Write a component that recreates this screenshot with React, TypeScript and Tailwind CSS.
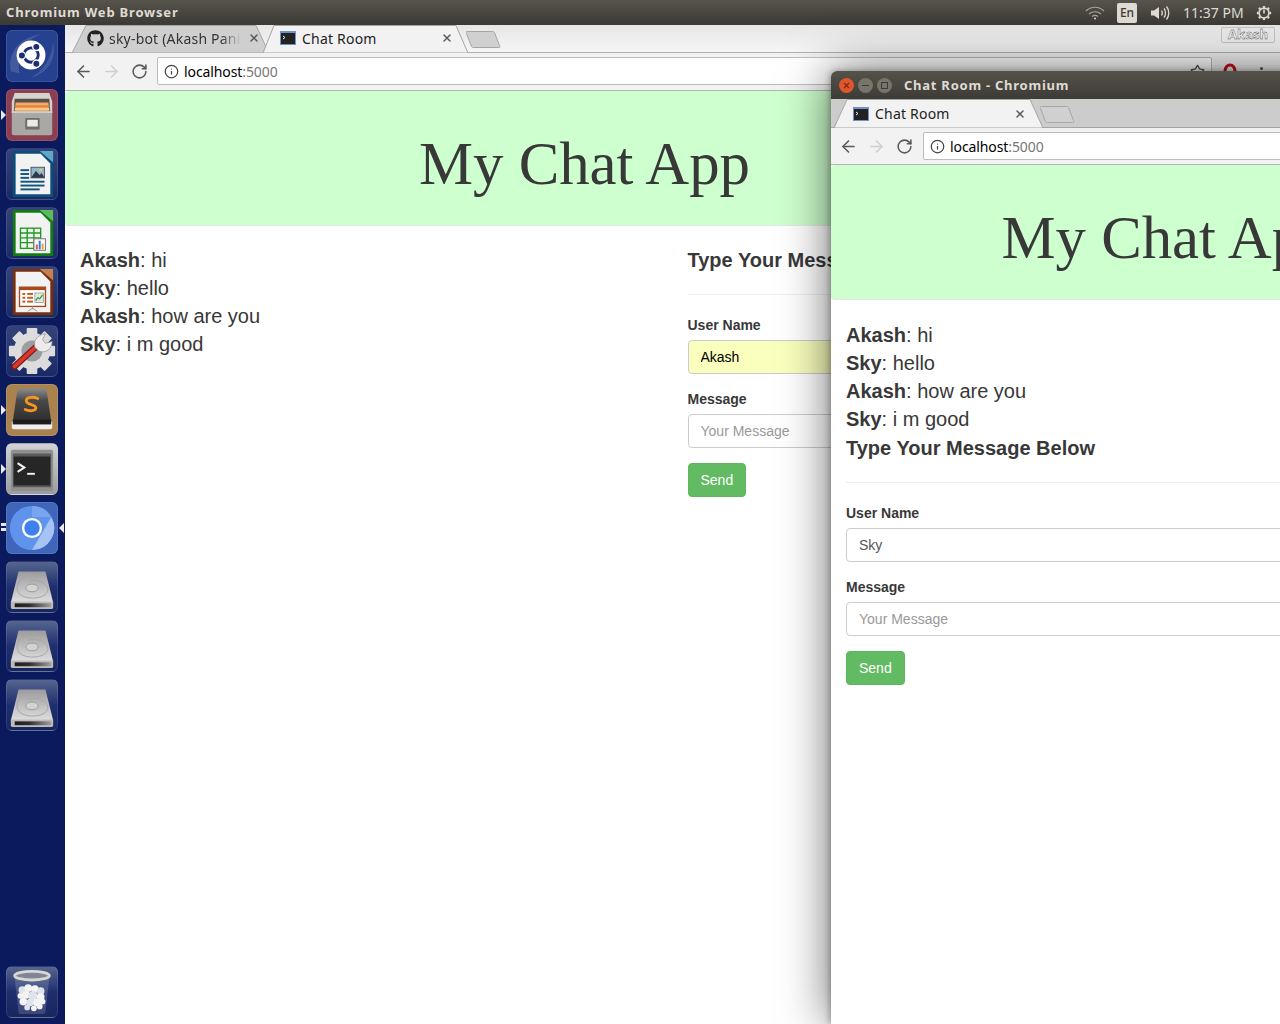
import { ArrowLeft, ArrowRight, Info, RotateCw, Star, X } from "lucide-react";
import type { ReactNode } from "react";
import { FaGithub } from "react-icons/fa";

const messages = [
  ["Akash", "hi"],
  ["Sky", "hello"],
  ["Akash", "how are you"],
  ["Sky", "i m good"],
];

function Tile({ bg, pip, right, children }: { bg: string; pip?: "one" | "two"; right?: boolean; children: ReactNode }) {
  return (
    <div className={`relative w-[52px] h-[52px] shrink-0 rounded-[6px] border border-white/10 ${bg}`}>
      {children}
      {pip === "one" && (
        <span className="absolute left-[-6px] top-[20px] w-0 h-0 border-y-[5px] border-y-transparent border-l-[5px] border-l-[#e8e8e8]" />
      )}
      {pip === "two" && (
        <span className="absolute left-[-6px] top-[20px] flex flex-col gap-[2px]">
          <span className="block w-[5px] h-[3px] bg-[#e8e8e8]" />
          <span className="block w-[5px] h-[3px] bg-[#e8e8e8]" />
        </span>
      )}
      {right && (
        <span className="absolute right-[-7px] top-[20px] w-0 h-0 border-y-[5px] border-y-transparent border-r-[5px] border-r-[#e8e8e8]" />
      )}
    </div>
  );
}

function UbuntuIcon() {
  return (
    <svg viewBox="0 0 52 52" className="w-full h-full">
      <path d="M4 42C0 22 14 6 36 3 20 9 10 22 13 44z" fill="#fff" opacity=".14" />
      <path d="M48 12c4 18-6 32-24 37 14-8 22-20 24-37z" fill="#fff" opacity=".12" />
      <circle cx="25" cy="25" r="15" fill="#fff" />
      <circle cx="25" cy="25" r="7.500" fill="none" stroke="#1b2d75" strokeWidth="3" />
      <circle cx="15.500" cy="25.500" r="3.800" fill="#1b2d75" stroke="#fff" strokeWidth="1.400" />
      <circle cx="30.500" cy="16.500" r="3.800" fill="#1b2d75" stroke="#fff" strokeWidth="1.400" />
      <circle cx="30.500" cy="34" r="3.800" fill="#1b2d75" stroke="#fff" strokeWidth="1.400" />
    </svg>
  );
}

function FilesIcon() {
  return (
    <svg viewBox="0 0 52 52" className="w-full h-full">
      <path d="M8 3h36l3 9v12H5V12z" fill="#d4d3cf" />
      <path d="M8 9h36l1 14H7z" fill="#55504a" />
      <path d="M9 13h34l1 9H8z" fill="#f3a765" />
      <path d="M8 16h36v2H8z" fill="#e47a3c" />
      <path d="M8 19h36v1.500H8z" fill="#fbd49c" />
      <path d="M5 22h42v23a2 2 0 0 1-2 2H7a2 2 0 0 1-2-2z" fill="#a9a8a4" />
      <rect x="5" y="22" width="42" height="2" fill="#cfcec9" />
      <rect x="19" y="29" width="15" height="12" rx="1" fill="#6f6e6a" />
      <rect x="21" y="31" width="11" height="7" fill="#ecebe8" />
    </svg>
  );
}

function DocIcon({ edge, corner, children }: { edge: string; corner: string; children: ReactNode }) {
  return (
    <svg viewBox="0 0 52 52" className="w-full h-full">
      <path d="M6 2h30l12 12v36H6z" fill={edge} />
      <path d="M9 5h26l10 10v32H9z" fill="#f2f2f2" />
      <path d="M34 2h14v12z" fill={corner} />
      {children}
    </svg>
  );
}

function WriterIcon() {
  return (
    <DocIcon edge="#0b4f7a" corner="#5fa6c9">
      <rect x="14" y="21" width="9" height="2" fill="#12537f" />
      <rect x="14" y="25" width="9" height="2" fill="#12537f" />
      <rect x="14" y="29" width="9" height="2" fill="#12537f" />
      <rect x="14" y="33" width="25" height="2" fill="#12537f" />
      <rect x="14" y="37" width="25" height="2" fill="#12537f" />
      <rect x="14" y="41" width="20" height="2" fill="#12537f" />
      <rect x="25" y="19" width="14" height="11" fill="#8fb5cf" stroke="#40586c" />
      <path d="M25 30l5-7 4 4 2-2 3 5z" fill="#2e3a44" />
      <circle cx="35" cy="22" r="1.500" fill="#f2c94c" />
    </DocIcon>
  );
}

function CalcIcon() {
  return (
    <DocIcon edge="#127b12" corner="#5dbb5d">
      <g fill="none" stroke="#1f9a1f" strokeWidth="1.400">
        <rect x="14" y="21" width="21" height="21" />
        <path d="M14 26h21M14 31h21M14 36h21M21 21v21M28 21v21" />
      </g>
      <rect x="28" y="32" width="12" height="12" fill="#f7f7f7" stroke="#777" />
      <rect x="30" y="38" width="2" height="5" fill="#d9534f" />
      <rect x="33" y="34" width="2" height="9" fill="#2f7ed8" />
      <rect x="36" y="37" width="2" height="6" fill="#f0a030" />
    </DocIcon>
  );
}

function ImpressIcon() {
  return (
    <DocIcon edge="#7a2e0c" corner="#c77f50">
      <rect x="13" y="21" width="27" height="20" fill="#fff" stroke="#a8481a" strokeWidth="1.400" />
      <rect x="13" y="21" width="27" height="3" fill="#a8481a" />
      <rect x="16" y="27" width="3" height="2" fill="#c2571f" />
      <rect x="21" y="27" width="6" height="2" fill="#c2571f" />
      <rect x="16" y="31" width="3" height="2" fill="#c2571f" />
      <rect x="21" y="31" width="6" height="2" fill="#c2571f" />
      <rect x="16" y="35" width="3" height="2" fill="#c2571f" />
      <rect x="21" y="35" width="6" height="2" fill="#c2571f" />
      <rect x="29" y="27" width="9" height="10" fill="#dfe9df" stroke="#777" strokeWidth=".6" />
      <path d="M30 35l2-3 2 1 3-4" fill="none" stroke="#2b9a2b" strokeWidth="1.200" />
      <path d="M26.500 41v3M26.500 43l-5 3M26.500 43l5 3" stroke="#999" fill="none" />
    </DocIcon>
  );
}

function SettingsIcon() {
  return (
    <svg viewBox="0 0 52 52" className="w-full h-full">
      <g fill="#dcdcdc">
        {[0, 45, 90, 135, 180, 225, 270, 315].map((a) => (
          <rect key={a} x="20.500" y="2" width="11" height="12" rx="1" transform={`rotate(${a} 26 26)`} />
        ))}
        <circle cx="26" cy="26" r="19" />
      </g>
      <circle cx="26" cy="26" r="11" fill="#9c9da3" />
      <path d="M8 42L32 20" stroke="#7d1a16" strokeWidth="6.500" strokeLinecap="round" />
      <path d="M8 42L32 20" stroke="#d8382e" strokeWidth="4" strokeLinecap="round" />
      <path d="M29 22c-2-7 3-13 11-14l-3 6 3 4 7-2c0 8-7 13-14 10z" fill="#ececec" stroke="#8a8a8a" strokeWidth=".7" />
    </svg>
  );
}

function SublimeIcon() {
  return (
    <svg viewBox="0 0 52 52" className="w-full h-full">
      <defs>
        <linearGradient id="key" x1="0" y1="0" x2="0" y2="1">
          <stop offset="0" stopColor="#8a8a8a" />
          <stop offset=".35" stopColor="#4a4a4a" />
          <stop offset="1" stopColor="#2c2c2c" />
        </linearGradient>
      </defs>
      <path d="M11 4h30l5 34H6z" fill="url(#key)" />
      <path d="M5 38h42v6a2 2 0 0 1-2 2H7a2 2 0 0 1-2-2z" fill="#efefef" />
      <rect x="6" y="36" width="40" height="5" fill="#1c1c1c" />
      <path d="M32 14c-4-2-12-2-12 2.500 0 4.500 10 3.500 10 7.500 0 3-7 3.500-11 1.500" fill="none" stroke="#f7931e" strokeWidth="3" strokeLinecap="round" />
    </svg>
  );
}

function TerminalIcon() {
  return (
    <svg viewBox="0 0 52 52" className="w-full h-full">
      <rect x="4" y="6" width="44" height="43" rx="2" fill="#8f908e" />
      <rect x="6" y="10" width="40" height="35" rx="1" fill="#5a5a5a" />
      <rect x="7" y="13" width="38" height="30" fill="#262626" />
      <path d="M11 20l7 4.500-7 4.500" fill="none" stroke="#f2f2f2" strokeWidth="2.200" />
      <rect x="21" y="30" width="8" height="2" fill="#f2f2f2" />
    </svg>
  );
}

function ChromiumIcon() {
  return (
    <svg viewBox="0 0 52 52" className="w-full h-full">
      <circle cx="26" cy="26" r="23" fill="#5f93ec" />
      <path d="M26 3a23 23 0 0 1 20 11.500H26z" fill="#79a5ee" />
      <path d="M46 14.500A23 23 0 0 1 26 49l10-17z" fill="#a6c3f5" />
      <circle cx="26" cy="26" r="10.500" fill="#fff" />
      <circle cx="26" cy="26" r="8" fill="#3f80f0" />
    </svg>
  );
}

function DiskIcon() {
  return (
    <svg viewBox="0 0 52 52" className="w-full h-full">
      <defs>
        <linearGradient id="slot" x1="0" y1="0" x2="1" y2="0">
          <stop offset="0" stopColor="#1d1d1d" />
          <stop offset=".4" stopColor="#2e2e2e" />
          <stop offset="1" stopColor="#a0a0a0" />
        </linearGradient>
        <linearGradient id="face" x1="0" y1="0" x2="0" y2="1">
          <stop offset="0" stopColor="#9c9c9c" />
          <stop offset="1" stopColor="#dedede" />
        </linearGradient>
      </defs>
      <path d="M12 10h28l8 32H4z" fill="url(#face)" />
      <path d="M22 12c-10 6-14 14-10 20 6 8 26 7 30-1 3-7-8-14-20-11" fill="none" stroke="#a5a5a5" />
      <ellipse cx="26" cy="27" rx="6.500" ry="4" fill="#d2d2d2" stroke="#9a9a9a" />
      <path d="M4 41h44v6a2 2 0 0 1-2 2H6a2 2 0 0 1-2-2z" fill="#bcbcbc" />
      <rect x="8" y="43" width="38" height="4" fill="url(#slot)" />
    </svg>
  );
}

function TrashIcon() {
  const blobs = [
    [16, 24, 4], [22, 22, 4], [29, 23, 4], [35, 25, 4], [14, 30, 3], [20, 29, 4], [27, 30, 5], [35, 31, 4],
    [17, 36, 4], [24, 37, 4], [31, 37, 4], [37, 36, 3], [21, 42, 3], [28, 43, 3], [34, 41, 3],
  ];
  return (
    <svg viewBox="0 0 52 52" className="w-full h-full">
      <path d="M8 11l4 36a3 3 0 0 0 3 2h22a3 3 0 0 0 3-2l4-36z" fill="#fff" opacity=".16" />
      <ellipse cx="26" cy="9" rx="18" ry="4.500" fill="#7f8699" stroke="#d8d8ce" strokeWidth="3" />
      {blobs.map(([x, y, r], i) => (
        <circle key={i} cx={x} cy={y} r={r} fill={i % 3 === 0 ? "#dfe3ea" : "#f4f4f4"} />
      ))}
    </svg>
  );
}

function Launcher() {
  const disk = "bg-gradient-to-b from-[#56658f] via-[#1f2e6e] to-[#18265f]";
  const dark = "bg-gradient-to-b from-[#34447a] to-[#1a2a66]";
  return (
    <aside className="w-[65px] shrink-0 flex flex-col gap-[7px] pt-[5px] pb-[6px] pl-[6px] bg-[#0a1a5c]">
      <Tile bg="bg-[#25418f]"><UbuntuIcon /></Tile>
      <Tile bg="bg-[#8b3f52]" pip="one"><FilesIcon /></Tile>
      <Tile bg={dark}><WriterIcon /></Tile>
      <Tile bg={dark}><CalcIcon /></Tile>
      <Tile bg={dark}><ImpressIcon /></Tile>
      <Tile bg={dark}><SettingsIcon /></Tile>
      <Tile bg="bg-[#aa8250]" pip="one"><SublimeIcon /></Tile>
      <Tile bg="bg-gradient-to-b from-[#d0d2d6] to-[#9a9ca0]" pip="one"><TerminalIcon /></Tile>
      <Tile bg="bg-[#3f66bb]" pip="two" right><ChromiumIcon /></Tile>
      <Tile bg={disk}><DiskIcon /></Tile>
      <Tile bg={disk}><DiskIcon /></Tile>
      <Tile bg={disk}><DiskIcon /></Tile>
      <div className="mt-auto">
        <Tile bg={disk}><TrashIcon /></Tile>
      </div>
    </aside>
  );
}

function TopBar() {
  return (
    <header className="h-[25px] shrink-0 flex items-center pl-[6px] pr-[8px] bg-gradient-to-b from-[#57544c] to-[#3b3934] text-[#dfdbd2] font-['Noto_Sans',sans-serif]">
      <span className="text-[13px] font-bold tracking-[0.8px]">Chromium Web Browser</span>
      <div className="ml-auto flex items-center">
        <svg viewBox="0 0 20 14" className="w-[20px] h-[14px]" fill="none" stroke="#a9a69e" strokeWidth="1.200">
          <path d="M1 5c5-5 13-5 18 0M4 8c3.500-3 8.500-3 12 0M7 10.500c2-1.500 4-1.500 6 0" />
          <circle cx="10" cy="12.500" r="1" fill="#dfdbd2" stroke="none" />
        </svg>
        <span className="ml-[12px] w-[20px] h-[20px] rounded-[2px] bg-[#dfdbd2] text-[#3c3a35] text-[12px] font-medium flex items-center justify-center">En</span>
        <svg viewBox="0 0 20 16" className="ml-[13px] w-[20px] h-[16px]" fill="none" stroke="#dfdbd2" strokeWidth="1.300">
          <path d="M1 5.500h3L9 2v12l-5-3.500H1z" fill="#dfdbd2" stroke="none" />
          <path d="M11.500 5.500c1 1.500 1 3.500 0 5M14 3.500c2 2.500 2 6.500 0 9M16.500 1.500c3 3.500 3 9.500 0 13" />
        </svg>
        <span className="ml-[13px] text-[14px] w-[60px] whitespace-nowrap">11:37 PM</span>
        <svg viewBox="0 0 18 18" className="ml-[13px] w-[16px] h-[16px]" fill="none" stroke="#dfdbd2">
          <path d="M9 1v2M9 15v2M1 9h2M15 9h2M3.300 3.300l1.400 1.400M13.300 13.300l1.400 1.400M3.300 14.700l1.400-1.400M13.300 4.700l1.400-1.400" strokeWidth="2.600" />
          <circle cx="9" cy="9" r="5.500" strokeWidth="1.800" />
          <path d="M9 5v4.500" strokeWidth="1.800" />
        </svg>
      </div>
    </header>
  );
}

function TabShape({ d, fill }: { d: string; fill: string }) {
  return (
    <svg className="absolute inset-0 w-full h-full" aria-hidden="true">
      <path d={d} fill={fill} stroke="#a5a5a5" />
    </svg>
  );
}

function NewTab() {
  return (
    <svg viewBox="0 0 35 17" className="w-[35px] h-[17px] shrink-0">
      <path d="M1.500 .5h25a2 2 0 0 1 2 1l5 13a1 1 0 0 1-1 2h-25a2 2 0 0 1-2-1l-5-13a1 1 0 0 1 1-2z" fill="#d0d0d0" stroke="#a5a5a5" />
    </svg>
  );
}

function ConsoleFavicon() {
  return (
    <svg viewBox="0 0 16 14" className="w-[16px] h-[14px] shrink-0">
      <rect width="16" height="14" fill="#6f93c9" />
      <rect x="1" y="2" width="14" height="11" fill="#222" />
      <path d="M3 5l2 1.500L3 8" fill="none" stroke="#eee" />
    </svg>
  );
}

function Toolbar({ extra, children }: { extra: string; children?: ReactNode }) {
  return (
    <div className={`shrink-0 flex items-center bg-[#f2f2f2] border-b border-[#b5b5b5] ${extra}`}>
      <ArrowLeft size={19} strokeWidth={2} className="text-[#5a5a5a] shrink-0" />
      <ArrowRight size={19} strokeWidth={2} className="ml-[9px] text-[#cfcfcf] shrink-0" />
      <RotateCw size={17} strokeWidth={2.2} className="ml-[10px] text-[#5a5a5a] shrink-0" />
      {children}
    </div>
  );
}

function ChatBody({ user, stacked }: { user: string; stacked?: boolean }) {
  const filled = user === "Akash" ? "bg-[#faffbd] text-black" : "bg-white text-[#555]";
  const form = (
    <>
      <h3 className={`text-[20px] leading-[28px] font-bold ${stacked ? "mt-[1px]" : ""}`}>Type Your Message Below</h3>
      <hr className="mt-[20px] mb-[20px] border-[#eee]" />
      <label className="block text-[14px] leading-[20px] font-bold mb-[5px]">User Name</label>
      <input
        readOnly
        value={user}
        className={`block w-full h-[34px] px-[12px] text-[14px] rounded-[4px] border border-[#ccc] outline-none ${filled}`}
      />
      <label className="block mt-[15px] text-[14px] leading-[20px] font-bold mb-[5px]">Message</label>
      <input
        readOnly
        placeholder="Your Message"
        className="block w-full h-[34px] px-[12px] text-[14px] rounded-[4px] border border-[#ccc] bg-white outline-none placeholder:text-[#999]"
      />
      <button className="block mt-[15px] h-[34px] px-[12px] text-[14px] text-white rounded-[4px] bg-[#62bb62] border border-[#5cb85c]">
        Send
      </button>
    </>
  );

  return (
    <div className="flex-1 bg-white text-[#383838] font-['Liberation_Sans',Arial,sans-serif]">
      <div
        className={`h-[135px] flex items-center justify-center pt-[12px] rounded-[4px] bg-[#ceffce] border-b border-[#e7e7e7] ${
          stacked ? "" : "pr-[176px]"
        }`}
      >
        <h1 className="font-['Liberation_Serif','Times_New_Roman',serif] text-[60.8px] leading-none whitespace-nowrap">My Chat App</h1>
      </div>
      <div className={stacked ? "px-[15px] pt-[21px]" : "grid grid-cols-2 pt-[20px]"}>
        <div className={stacked ? "" : "px-[15px]"}>
          {messages.map(([who, text], i) => (
            <p key={i} className="text-[20px] leading-[28px]">
              <b>{who}</b>: {text}
            </p>
          ))}
        </div>
        <div className={stacked ? "" : "px-[15px]"}>{form}</div>
      </div>
    </div>
  );
}

function MainWindow() {
  return (
    <main className="flex-1 min-w-0 flex flex-col font-['Noto_Sans',sans-serif]">
      <div className="h-[28px] shrink-0 flex items-start bg-gradient-to-b from-[#e6e6e6] to-[#f6f6f6] border-b border-[#b0b0b0]">
        <div className="relative ml-[6px] w-[198px] h-[28px] shrink-0">
          <TabShape d="M1 28L15 0.500H185L198 28z" fill="#cfcfcf" />
          <div className="relative flex items-center h-full pl-[16px] pb-[2px]">
            <FaGithub size={17} className="text-[#222] shrink-0" />
            <span className="ml-[5px] text-[14px] tracking-[0.2px] text-[#333] w-[132px] overflow-hidden whitespace-nowrap [mask-image:linear-gradient(to_right,black_85%,transparent)]">
              sky-bot (Akash Pani
            </span>
            <X size={12} strokeWidth={3} className="ml-[7px] text-[#5a5a5a] shrink-0" />
          </div>
        </div>
        <div className="relative -ml-[6px] w-[206px] h-[28px] shrink-0">
          <TabShape d="M0 28L11 0.500H193L205 28z" fill="#f2f2f2" />
          <div className="relative flex items-center h-full pl-[17px] pr-[16px] pb-[2px]">
            <ConsoleFavicon />
            <span className="ml-[6px] text-[14px] tracking-[0.2px] text-[#222]">Chat Room</span>
            <X size={12} strokeWidth={3} className="ml-auto text-[#5a5a5a] shrink-0" />
          </div>
        </div>
        <div className="mt-[6px] -ml-[3px]"><NewTab /></div>
        <div className="ml-auto mr-[5px] mt-[2px] h-[16px] w-[54px] border border-[#c4c4c4] rounded-[2px] flex items-center justify-center text-[13px] font-bold text-white [-webkit-text-stroke:0.4px_#444]">
          Akash
        </div>
      </div>
      <Toolbar extra="h-[38px] pl-[9px] pb-[1px]">
        <div className="ml-[9px] w-[1055px] h-[28px] shrink-0 flex items-center pl-[6px] bg-white border border-[#bdbdbd] rounded-[2px]">
          <Info size={15} className="text-[#444] shrink-0" />
          <span className="ml-[5px] text-[14px] tracking-[-0.1px] text-black">localhost<span className="text-[#777]">:5000</span></span>
          <Star size={15} className="ml-auto mr-[6px] text-[#555]" />
        </div>
        <svg viewBox="0 0 16 16" className="ml-[10px] w-[16px] h-[16px] shrink-0" fill="none" stroke="#cc0f16" strokeWidth="3">
          <ellipse cx="8" cy="8" rx="5" ry="6" />
        </svg>
        <span className="ml-[22px] flex flex-col gap-[2px]">
          <span className="block w-[3px] h-[3px] rounded-full bg-[#555]" />
          <span className="block w-[3px] h-[3px] rounded-full bg-[#555]" />
        </span>
      </Toolbar>
      <ChatBody user="Akash" />
    </main>
  );
}

function FloatingWindow() {
  return (
    <section className="absolute left-[831px] top-[71px] bottom-0 w-[672px] flex flex-col rounded-t-[6px] overflow-hidden shadow-[-1px_0_6px_rgba(0,0,0,0.3),0_0_50px_rgba(0,0,0,0.6)] font-['Noto_Sans',sans-serif]">
      <div className="h-[28px] shrink-0 flex items-center pl-[8px] bg-gradient-to-b from-[#55524a] to-[#3d3b36]">
        <span className="w-[15px] h-[15px] rounded-full bg-[#e0562c] flex items-center justify-center">
          <X size={9} strokeWidth={3} className="text-[#7a2a10]" />
        </span>
        <span className="ml-[4px] w-[15px] h-[15px] rounded-full bg-[#77746c] flex items-center justify-center">
          <span className="block w-[7px] h-[1px] bg-[#3d3b36]" />
        </span>
        <span className="ml-[4px] w-[15px] h-[15px] rounded-full bg-[#77746c] flex items-center justify-center">
          <span className="block w-[7px] h-[7px] border border-[#3d3b36]" />
        </span>
        <span className="ml-[12px] pt-[2px] text-[13px] font-bold tracking-[0.75px] text-[#dfdbd2]">Chat Room - Chromium</span>
      </div>
      <div className="h-[29px] shrink-0 flex items-start bg-[#cccccc] border-b border-[#a5a5a5]">
        <div className="relative ml-[3px] w-[209px] h-[29px] shrink-0">
          <TabShape d="M0 29L13 0.500H196L209 29z" fill="#f2f2f2" />
          <div className="relative flex items-center h-full pl-[19px] pr-[17px]">
            <ConsoleFavicon />
            <span className="ml-[6px] text-[14px] tracking-[0.2px] text-[#222]">Chat Room</span>
            <X size={12} strokeWidth={3} className="ml-auto text-[#5a5a5a] shrink-0" />
          </div>
        </div>
        <div className="mt-[7px] -ml-[3px]"><NewTab /></div>
      </div>
      <Toolbar extra="h-[37px] pl-[8px]">
        <div className="ml-[10px] flex-1 h-[28px] flex items-center pl-[6px] bg-white border border-[#bdbdbd] rounded-[2px] mr-[8px]">
          <Info size={15} className="text-[#444] shrink-0" />
          <span className="ml-[5px] text-[14px] tracking-[-0.1px] text-black">localhost<span className="text-[#777]">:5000</span></span>
        </div>
      </Toolbar>
      <ChatBody user="Sky" stacked />
    </section>
  );
}

export default function App() {
  return (
    <div className="relative w-[1280px] h-[1024px] overflow-hidden flex flex-col bg-white">
      <TopBar />
      <div className="flex-1 min-h-0 flex">
        <Launcher />
        <MainWindow />
      </div>
      <FloatingWindow />
    </div>
  );
}
